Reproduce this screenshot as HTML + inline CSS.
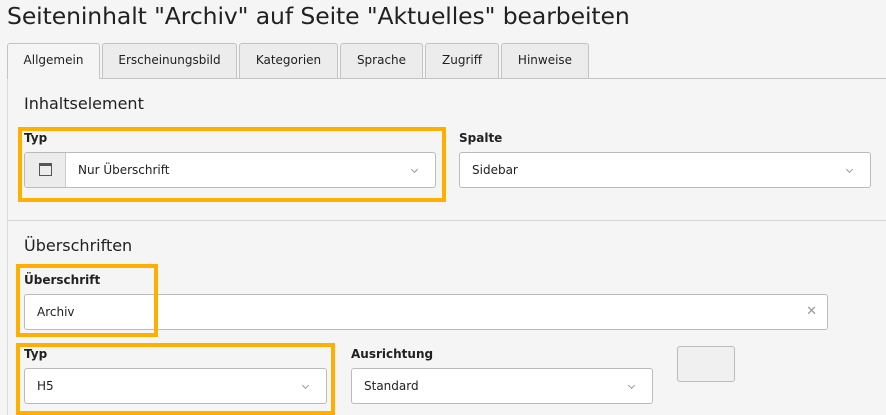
<!DOCTYPE html>
<html><head><meta charset="utf-8"><style>
*{box-sizing:border-box;margin:0;padding:0}
body{width:886px;height:415px;overflow:hidden;background:#f5f5f5;font-family:"DejaVu Sans","Liberation Sans",sans-serif;color:#212121;position:relative}
.a{position:absolute}
h1{position:absolute;left:7px;top:2px;font-size:23.5px;font-weight:normal;white-space:nowrap;letter-spacing:-0.1px}
.tab{position:absolute;top:43px;height:36px;background:#ececec;border:1px solid #c3c3c3;border-radius:3px 3px 0 0;font-size:12px;text-align:center;line-height:33px}
.tab.act{background:#f5f5f5;border-bottom:none;height:36px;z-index:2}
.lbl{position:absolute;font-size:12px;font-weight:bold}
.h{position:absolute;font-size:16px;white-space:nowrap}
.inp{position:absolute;height:36px;background:#fff;border:1px solid #bbb;border-radius:3px;font-size:12px;line-height:34px;padding-left:12px}
.chev{position:absolute;right:18px;top:14px;width:5px;height:5px;border-right:1px solid #999;border-bottom:1px solid #999;transform:rotate(45deg)}
.ob{position:absolute;border:4px solid #ffaf00}
</style></head><body>
<h1>Seiteninhalt "Archiv" auf Seite "Aktuelles" bearbeiten</h1>
<div class="a" style="left:7px;top:78px;width:879px;height:1px;background:#c3c3c3"></div>
<div class="a" style="left:7px;top:78px;width:1px;height:337px;background:#ddd"></div>
<div class="tab act" style="left:7px;width:93px">Allgemein</div>
<div class="tab" style="left:102px;width:135px">Erscheinungsbild</div>
<div class="tab" style="left:239px;width:99px">Kategorien</div>
<div class="tab" style="left:340px;width:83px">Sprache</div>
<div class="tab" style="left:425px;width:74px">Zugriff</div>
<div class="tab" style="left:501px;width:88px">Hinweise</div>

<div class="h" style="left:24px;top:94px">Inhaltselement</div>
<div class="ob" style="left:18px;top:127px;width:428px;height:75px"></div>
<div class="lbl" style="left:24px;top:131px">Typ</div>
<div class="inp" style="left:24px;top:152px;width:412px;padding-left:53px">Nur Überschrift<div class="chev"></div>
<div class="a" style="left:0;top:0;width:41px;height:34px;background:#ececec;border-right:1px solid #ccc;border-radius:3px 0 0 3px"></div>
<div class="a" style="left:14px;top:10px;width:13px;height:13px;border:1px solid #555;border-top:3px solid #555"></div></div>
<div class="lbl" style="left:459px;top:131px">Spalte</div>
<div class="inp" style="left:459px;top:152px;width:412px">Sidebar<div class="chev"></div></div>
<div class="a" style="left:7px;top:220px;width:879px;height:1px;background:#d5d5d5"></div>

<div class="h" style="left:24px;top:236px">Überschriften</div>
<div class="lbl" style="left:24px;top:273px">Überschrift</div>
<div class="inp" style="left:24px;top:294px;width:804px">Archiv<span class="a" style="right:10px;top:0;color:#999;font-size:13px">✕</span></div>
<div class="ob" style="left:16px;top:264px;width:142px;height:73px"></div>
<div class="lbl" style="left:24px;top:347px">Typ</div>
<div class="inp" style="left:24px;top:368px;width:303px">H5<div class="chev"></div></div>
<div class="ob" style="left:16px;top:343px;width:319px;height:72px"></div>
<div class="lbl" style="left:351px;top:347px">Ausrichtung</div>
<div class="inp" style="left:351px;top:368px;width:302px">Standard<div class="chev"></div></div>
<div class="a" style="left:677px;top:346px;width:58px;height:36px;background:#f0f0f0;border:1px solid #bbb;border-radius:3px"></div>
</body></html>
